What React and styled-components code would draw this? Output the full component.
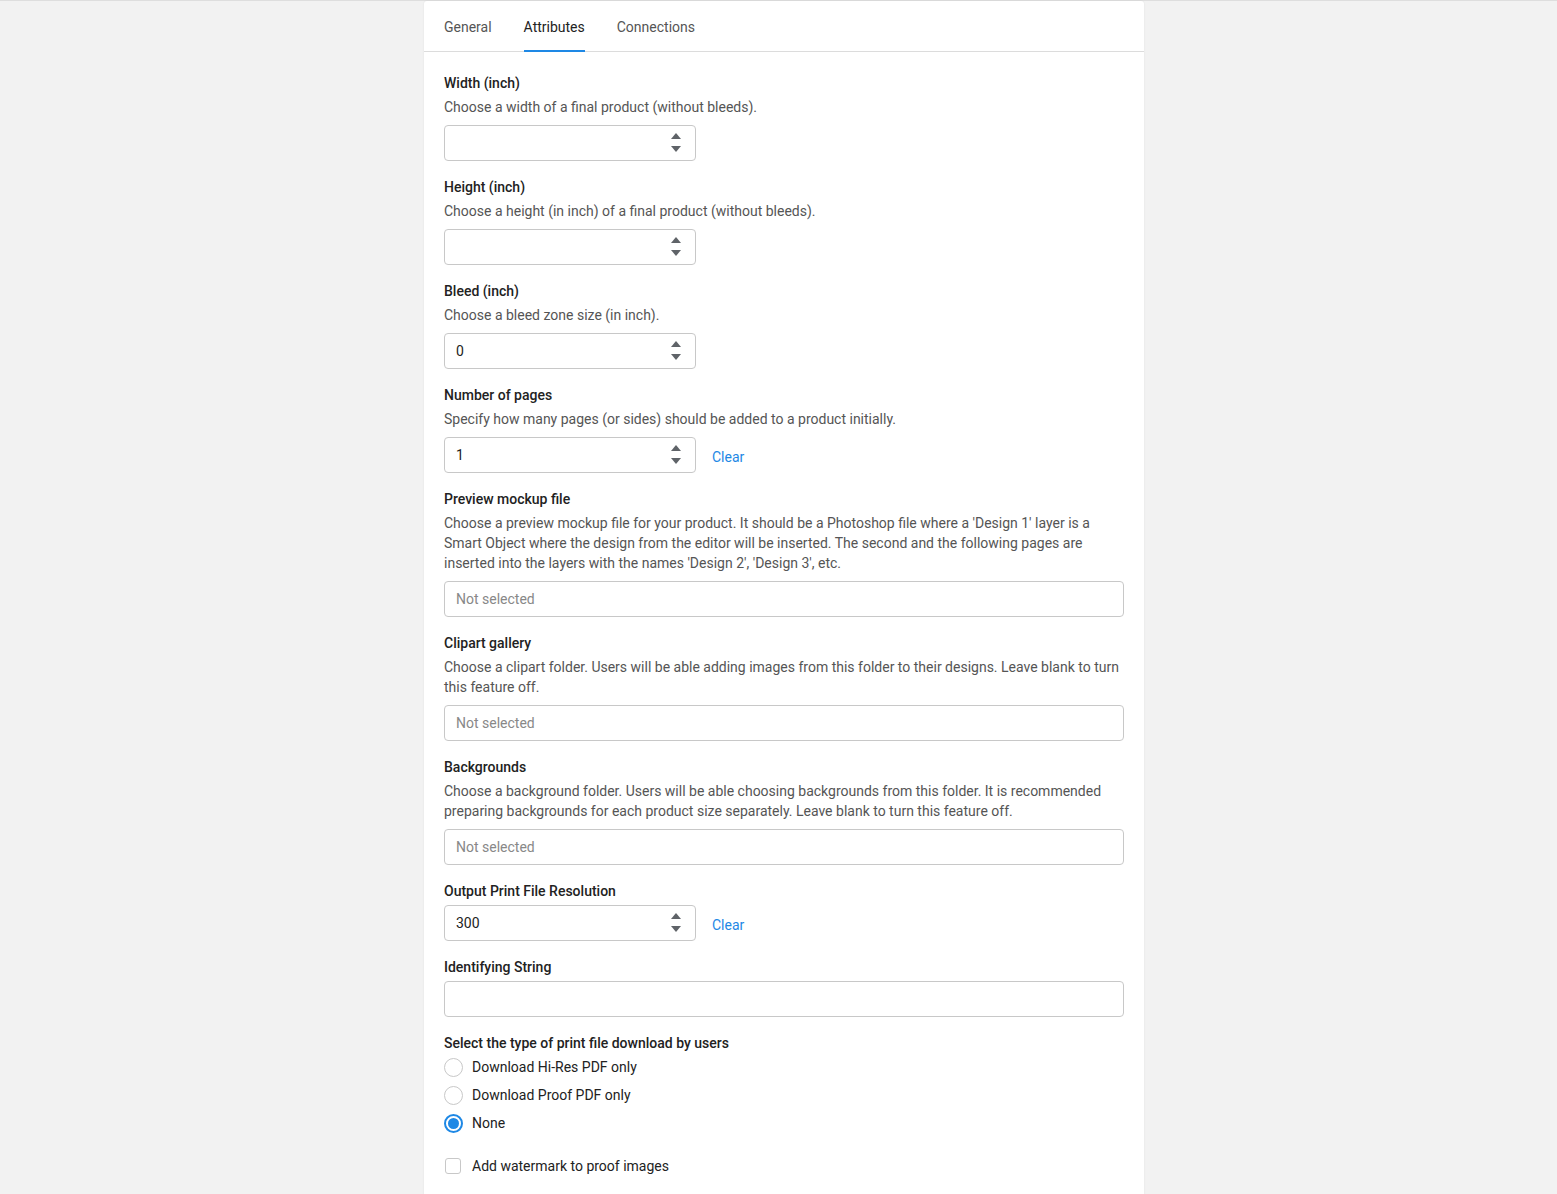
import React, { useState } from "react";
import styled, { createGlobalStyle } from "styled-components";

const GlobalStyle = createGlobalStyle`
  html, body {
    margin: 0;
    padding: 0;
    background: #f2f2f2;
    font-family: Roboto, "Noto Sans", "Liberation Sans", sans-serif;
    font-size: 14px;
    color: #222;
  }
  * { box-sizing: border-box; }
`;

const Page = styled.main`
  border-top: 1px solid #dedede;
  min-height: 1194px;
  display: flex;
  justify-content: center;
  padding-left: 11px;
`;

const Panel = styled.section`
  width: 720px;
  background: #fff;
  border-radius: 3px 3px 0 0;
  box-shadow: 0 0 2px rgba(0, 0, 0, 0.08);
`;

const Tabs = styled.nav`
  display: flex;
  gap: 32px;
  padding: 0 20px;
  height: 51px;
  border-bottom: 1px solid #dcdcdc;
`;

const Tab = styled.button`
  border: none;
  background: none;
  padding: 0;
  font: inherit;
  font-size: 14px;
  color: ${(p) => (p.$active ? "#222" : "#555")};
  border-bottom: 2px solid ${(p) => (p.$active ? "#1e88e5" : "transparent")};
  height: 51px;
  padding-top: 3px;
  cursor: pointer;
`;

const Body = styled.div`
  padding: 21px 20px 20px;
  display: flex;
  flex-direction: column;
  gap: 16px;
`;

const Field = styled.div`
  display: flex;
  flex-direction: column;
`;

const Label = styled.div`
  font-weight: 500;
  line-height: 20px;
  color: #222;
  margin-bottom: 4px;
`;

const Help = styled.div`
  color: #555;
  line-height: 20px;
  margin-bottom: 8px;
`;

const Row = styled.div`
  display: flex;
  align-items: center;
  gap: 16px;
`;

const NumberBox = styled.div`
  position: relative;
  width: 252px;
  height: 36px;
  border: 1px solid #c8c8c8;
  border-radius: 4px;
  display: flex;
  align-items: center;
  padding: 0 11px;
  color: #222;
`;

const Spinner = styled.div`
  position: absolute;
  right: 14px;
  top: 7px;
  display: flex;
  flex-direction: column;
  gap: 7px;
`;

const TextBox = styled.div`
  height: 36px;
  width: 100%;
  border: 1px solid #c8c8c8;
  border-radius: 4px;
  display: flex;
  align-items: center;
  padding: 0 11px;
  color: ${(p) => (p.$placeholder ? "#888" : "#222")};
`;

const ClearLink = styled.a`
  color: #1e88e5;
  text-decoration: none;
  margin-top: 4px;
  cursor: pointer;
`;

const Options = styled.div`
  display: flex;
  flex-direction: column;
  gap: 8px;
`;

const Option = styled.label`
  display: flex;
  align-items: center;
  gap: 9px;
  height: 20px;
  line-height: 20px;
  cursor: pointer;
`;

const Radio = styled.span`
  width: 19px;
  height: 19px;
  border-radius: 50%;
  border: ${(p) => (p.$checked ? "2px solid #1e88e5" : "1px solid #c8c8c8")};
  display: flex;
  align-items: center;
  justify-content: center;
  &::after {
    content: "";
    width: 11px;
    height: 11px;
    border-radius: 50%;
    background: ${(p) => (p.$checked ? "#1e88e5" : "transparent")};
  }
`;

const Check = styled.span`
  width: 16px;
  height: 16px;
  margin: 0 2px 0 1px;
  border: 1px solid #c8c8c8;
  border-radius: 3px;
`;

const Watermark = styled(Option)`
  margin-top: 23px;
`;

const Arrow = ({ up }) => (
  <svg width="10" height="6" viewBox="0 0 10 6">
    <path d={up ? "M0 6 L5 0 L10 6 Z" : "M0 0 L5 6 L10 0 Z"} fill="#5f6368" />
  </svg>
);

const NumberInput = ({ value }) => (
  <NumberBox>
    {value}
    <Spinner>
      <Arrow up />
      <Arrow />
    </Spinner>
  </NumberBox>
);

const radios = ["Download Hi-Res PDF only", "Download Proof PDF only", "None"];

const App = () => {
  const [tab, setTab] = useState("Attributes");
  const [choice, setChoice] = useState("None");

  return (
    <Page>
      <GlobalStyle />
      <Panel>
        <Tabs>
          {["General", "Attributes", "Connections"].map((t) => (
            <Tab key={t} $active={tab === t} onClick={() => setTab(t)}>
              {t}
            </Tab>
          ))}
        </Tabs>
        <Body>
          <Field>
            <Label>Width (inch)</Label>
            <Help>Choose a width of a final product (without bleeds).</Help>
            <NumberInput value="" />
          </Field>
          <Field>
            <Label>Height (inch)</Label>
            <Help>Choose a height (in inch) of a final product (without bleeds).</Help>
            <NumberInput value="" />
          </Field>
          <Field>
            <Label>Bleed (inch)</Label>
            <Help>Choose a bleed zone size (in inch).</Help>
            <NumberInput value="0" />
          </Field>
          <Field>
            <Label>Number of pages</Label>
            <Help>Specify how many pages (or sides) should be added to a product initially.</Help>
            <Row>
              <NumberInput value="1" />
              <ClearLink>Clear</ClearLink>
            </Row>
          </Field>
          <Field>
            <Label>Preview mockup file</Label>
            <Help>
              Choose a preview mockup file for your product. It should be a Photoshop file where a 'Design 1' layer is a
              Smart Object where the design from the editor will be inserted. The second and the following pages are
              inserted into the layers with the names 'Design 2', 'Design 3', etc.
            </Help>
            <TextBox $placeholder>Not selected</TextBox>
          </Field>
          <Field>
            <Label>Clipart gallery</Label>
            <Help>
              Choose a clipart folder. Users will be able adding images from this folder to their designs. Leave blank to
              turn this feature off.
            </Help>
            <TextBox $placeholder>Not selected</TextBox>
          </Field>
          <Field>
            <Label>Backgrounds</Label>
            <Help>
              Choose a background folder. Users will be able choosing backgrounds from this folder. It is recommended
              preparing backgrounds for each product size separately. Leave blank to turn this feature off.
            </Help>
            <TextBox $placeholder>Not selected</TextBox>
          </Field>
          <Field>
            <Label>Output Print File Resolution</Label>
            <Row>
              <NumberInput value="300" />
              <ClearLink>Clear</ClearLink>
            </Row>
          </Field>
          <Field>
            <Label>Identifying String</Label>
            <TextBox />
          </Field>
          <Field>
            <Label>Select the type of print file download by users</Label>
            <Options>
              {radios.map((r) => (
                <Option key={r} onClick={() => setChoice(r)}>
                  <Radio $checked={choice === r} />
                  {r}
                </Option>
              ))}
            </Options>
            <Watermark>
              <Check />
              Add watermark to proof images
            </Watermark>
          </Field>
        </Body>
      </Panel>
    </Page>
  );
};

export default App;
